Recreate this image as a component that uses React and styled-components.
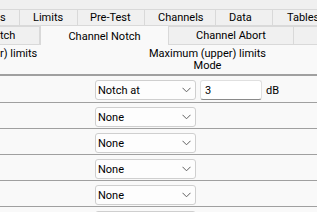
import React from "react";
import styled, { createGlobalStyle } from "styled-components";

const Global = createGlobalStyle`
  html, body { margin: 0; padding: 0; background: #f0f0f0; }
  body { font-family: Roboto, "Noto Sans", sans-serif; font-size: 11px; color: #000; }
`;

const Window = styled.div`
  width: 317px;
  height: 212px;
  overflow: hidden;
  background: #f0f0f0;
  display: flex;
  flex-direction: column;
`;

const TabStrip = styled.div`
  padding-top: 9px;
  display: flex;
  flex-direction: column;
`;

const TabRow = styled.div`
  display: flex;
  height: ${(p) => p.$h}px;
`;

const Tab = styled.div`
  flex: 0 0 ${(p) => p.$w}px;
  box-sizing: border-box;
  border-top: 1px solid #d9d9d9;
  border-right: 1px solid #d9d9d9;
  background: ${(p) => (p.$active ? "#f9f9f9" : "#f0f0f0")};
  display: flex;
  align-items: center;
  justify-content: ${(p) => (p.$pad != null ? "flex-start" : "center")};
  padding-left: ${(p) => p.$pad || 0}px;
  white-space: nowrap;
  overflow: hidden;
  ${(p) =>
    p.$active
      ? `margin-top: -1px; height: calc(100% + 1px); border-left: 1px solid #d9d9d9; padding-top: 1px;`
      : `border-bottom: 1px solid #d9d9d9;`}
`;

const Content = styled.div`
  flex: 1;
  background: #f9f9f9;
`;

const Header = styled.div`
  height: 31px;
  display: grid;
  grid-template-columns: 95px 1fr;
  grid-template-rows: 12px 12px;
  padding-top: 3px;
  box-sizing: border-box;
  border-bottom: 2px solid #a0a0a0;
  line-height: 12px;
`;

const HeadLeft = styled.div`
  white-space: nowrap;
`;

const HeadCenter = styled.div`
  text-align: center;
  white-space: nowrap;
  padding-left: 3px;
`;

const Row = styled.div`
  display: flex;
  align-items: flex-start;
  height: 26px;
  box-sizing: border-box;
  padding: 4px 0 0 95px;
  border-bottom: 1px solid #a0a0a0;

  ${Header} + & {
    height: 27px;
  }
`;

const Select = styled.div`
  flex: 0 0 101px;
  height: 20px;
  box-sizing: border-box;
  border: 1px solid #cfcfcf;
  border-radius: 3px;
  background: #fdfdfd;
  display: flex;
  align-items: center;
  justify-content: space-between;
  padding: 0 4px 0 2px;
`;

const Input = styled.div`
  flex: 0 0 62px;
  margin-left: 4px;
  height: 20px;
  box-sizing: border-box;
  border: 1px solid #e0e0e0;
  border-bottom: 1px solid #8a8a8a;
  border-radius: 3px;
  background: #fff;
  display: flex;
  align-items: center;
  padding-left: 4px;
`;

const Unit = styled.div`
  height: 20px;
  display: flex;
  align-items: center;
  margin-left: 4px;
`;

const Chevron = () => (
  <svg width="9" height="6" viewBox="0 0 9 6">
    <path d="M0.5 0.8 L4.5 4.8 L8.5 0.8" fill="none" stroke="#606060" strokeWidth="1" />
  </svg>
);

const modes = ["Notch at", "None", "None", "None", "None", "None"];

export default function App() {
  return (
    <Window>
      <Global />
      <TabStrip>
        <TabRow $h={17}>
          <Tab $w={20} $pad={0}>s</Tab>
          <Tab $w={58} $pad={13}>Limits</Tab>
          <Tab $w={67} $pad={12}>Pre-Test</Tab>
          <Tab $w={71} $pad={13}>Channels</Tab>
          <Tab $w={57} $pad={13}>Data</Tab>
          <Tab $w={67} $pad={14}>Tables</Tab>
        </TabRow>
        <TabRow $h={19}>
          <Tab $w={40} $pad={0}>tch</Tab>
          <Tab $w={129} $active>Channel Notch</Tab>
          <Tab $w={125}>Channel Abort</Tab>
          <Tab $w={60}></Tab>
        </TabRow>
      </TabStrip>
      <Content>
        <Header>
          <HeadLeft>r) limits</HeadLeft>
          <HeadCenter>Maximum (upper) limits</HeadCenter>
          <div />
          <HeadCenter>Mode</HeadCenter>
        </Header>
        {modes.map((m, i) => (
          <Row key={i}>
            <Select>
              <span>{m}</span>
              <Chevron />
            </Select>
            {i === 0 && (
              <>
                <Input>3</Input>
                <Unit>dB</Unit>
              </>
            )}
          </Row>
        ))}
      </Content>
    </Window>
  );
}
